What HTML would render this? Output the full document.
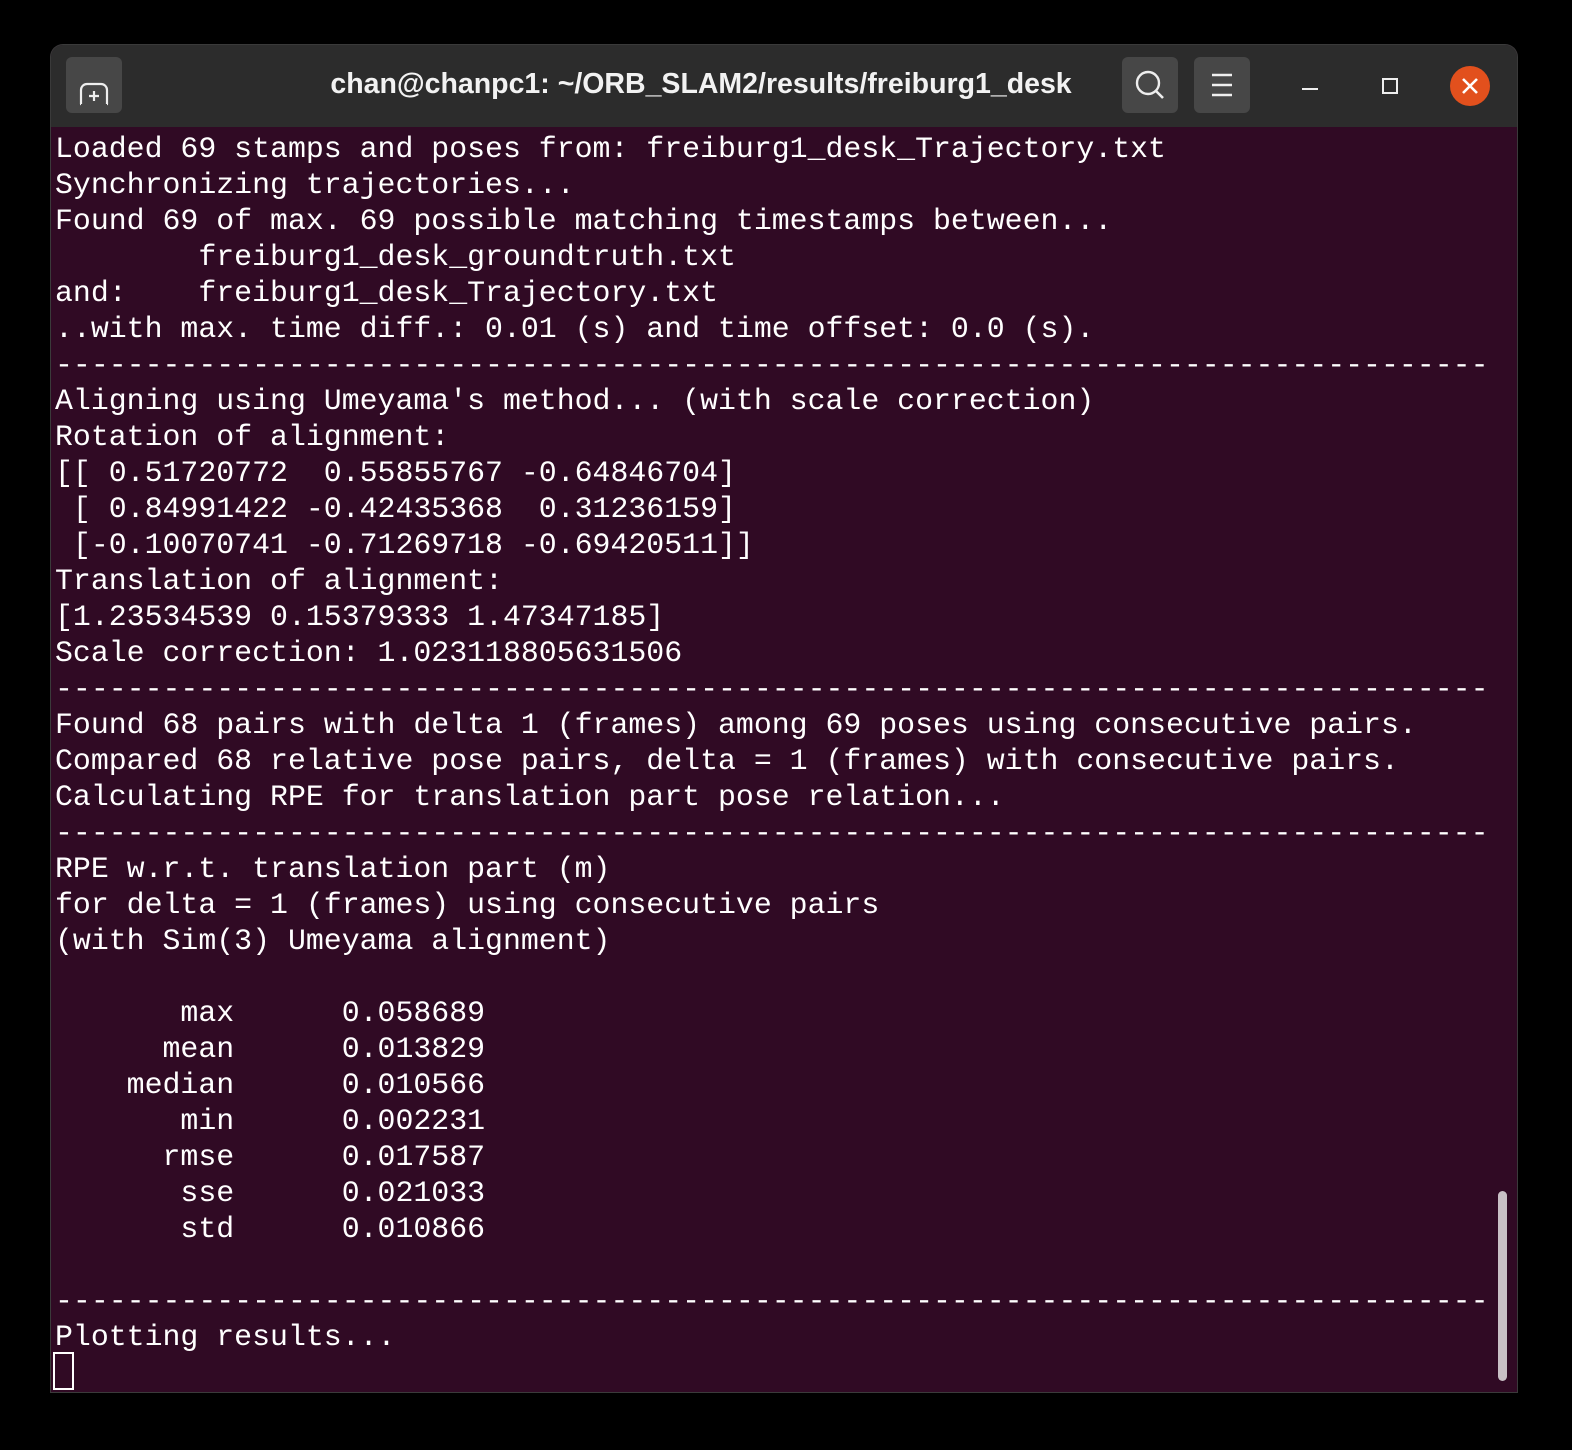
<!DOCTYPE html>
<html><head><meta charset="utf-8"><style>
html,body{margin:0;padding:0;background:#000;width:1572px;height:1450px;overflow:hidden}
.win{position:absolute;left:51px;top:45px;width:1466px;height:1347px;background:#300a24;border-radius:12px 12px 0 0;overflow:hidden;box-shadow:0 0 0 1px #3a3a3a}
.tb{position:absolute;left:0;top:0;width:1466px;height:82px;background:#2c2c2c}
.btn{position:absolute;top:12px;width:56px;height:56px;background:#474747;border-radius:6px}
.title{position:absolute;left:0;width:1300px;top:23px;text-align:center;font:bold 28.5px "Liberation Sans",sans-serif;color:#f2f2f2;white-space:nowrap}
pre{position:absolute;left:4px;top:86px;margin:0;font:29.87px/36px "Liberation Mono",monospace;color:#fff}
.cur{position:absolute;left:2px;top:1307px;width:21px;height:38px;border:2px solid #fff;box-sizing:border-box}
.sb{position:absolute;left:1447px;top:1146px;width:9px;height:190px;background:#c8c0c5;border-radius:5px}
</style></head><body>
<div class="win">
<div class="tb">
 <div class="btn" style="left:15px"><svg width="56" height="56" viewBox="0 0 56 56"><path d="M15 47V33a6 6 0 0 1 6-6h14a6 6 0 0 1 6 6v14M15 47h-1M41 47h1" stroke="#eee" stroke-width="2.2" fill="none"/><path d="M28 34v10M23 39h10" stroke="#eee" stroke-width="2.2"/></svg></div>
 <div class="title">chan@chanpc1: ~/ORB_SLAM2/results/freiburg1_desk</div>
 <div class="btn" style="left:1071px"><svg width="56" height="56" viewBox="0 0 56 56"><circle cx="26" cy="26" r="11" stroke="#eee" stroke-width="2.4" fill="none"/><path d="M34 34l7 7" stroke="#eee" stroke-width="2.6"/></svg></div>
 <div class="btn" style="left:1143px"><svg width="56" height="56" viewBox="0 0 56 56"><path d="M18 18h20M18 28h20M18 38h20" stroke="#eee" stroke-width="2.4"/></svg></div>
 <div style="position:absolute;left:1251px;top:43px;width:16px;height:2px;background:#eee"></div>
 <div style="position:absolute;left:1331px;top:33px;width:12px;height:12px;border:2px solid #eee"></div>
 <div style="position:absolute;left:1399px;top:21px;width:40px;height:40px;border-radius:50%;background:#e2501d"><svg width="40" height="40"><path d="M13 13l14 14M27 13L13 27" stroke="#fff" stroke-width="2.6"/></svg></div>
</div>
<pre>Loaded 69 stamps and poses from: freiburg1_desk_Trajectory.txt
Synchronizing trajectories...
Found 69 of max. 69 possible matching timestamps between...
        freiburg1_desk_groundtruth.txt
and:    freiburg1_desk_Trajectory.txt
..with max. time diff.: 0.01 (s) and time offset: 0.0 (s).
--------------------------------------------------------------------------------
Aligning using Umeyama's method... (with scale correction)
Rotation of alignment:
[[ 0.51720772  0.55855767 -0.64846704]
 [ 0.84991422 -0.42435368  0.31236159]
 [-0.10070741 -0.71269718 -0.69420511]]
Translation of alignment:
[1.23534539 0.15379333 1.47347185]
Scale correction: 1.023118805631506
--------------------------------------------------------------------------------
Found 68 pairs with delta 1 (frames) among 69 poses using consecutive pairs.
Compared 68 relative pose pairs, delta = 1 (frames) with consecutive pairs.
Calculating RPE for translation part pose relation...
--------------------------------------------------------------------------------
RPE w.r.t. translation part (m)
for delta = 1 (frames) using consecutive pairs
(with Sim(3) Umeyama alignment)

       max      0.058689
      mean      0.013829
    median      0.010566
       min      0.002231
      rmse      0.017587
       sse      0.021033
       std      0.010866

--------------------------------------------------------------------------------
Plotting results...</pre>
<div class="cur"></div>
<div class="sb"></div>
</div>
</body></html>
